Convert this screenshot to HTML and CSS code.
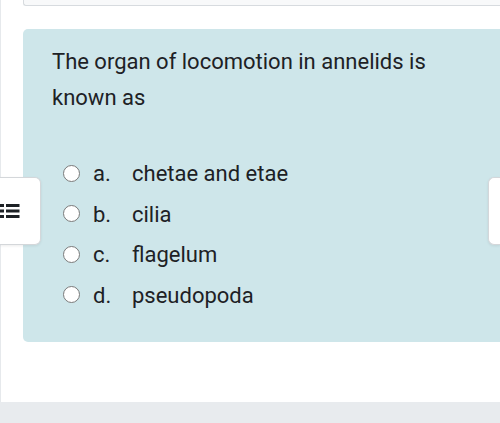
FILE: index.html
```html
<!DOCTYPE html>
<html>
<head>
<meta charset="utf-8">
<link rel="stylesheet" href="styles.css">
</head>
<body>
<div class="page">
  <div class="region">
    <div class="info-box"></div>
    <div class="formulation">
      <div class="qtext">The organ of locomotion in annelids is known as</div>
      <div class="answer">
        <label class="opt"><input type="radio" name="q1" class="radio"><span class="letter">a.</span><span class="text">chetae and etae</span></label>
        <label class="opt"><input type="radio" name="q1" class="radio"><span class="letter">b.</span><span class="text">cilia</span></label>
        <label class="opt"><input type="radio" name="q1" class="radio"><span class="letter">c.</span><span class="text">flagelum</span></label>
        <label class="opt"><input type="radio" name="q1" class="radio"><span class="letter">d.</span><span class="text">pseudopoda</span></label>
      </div>
    </div>
  </div>
  <div class="footer"></div>
  <button class="drawer-toggle left" aria-label="Open course index">
    <svg width="20" height="18" viewBox="0 0 20 18">
      <rect x="0" y="2" width="4" height="3" fill="#1d2125"/>
      <rect x="6" y="2" width="13.5" height="3" fill="#1d2125"/>
      <rect x="0" y="7.5" width="4" height="3" fill="#1d2125"/>
      <rect x="6" y="7.5" width="13.5" height="3" fill="#1d2125"/>
      <rect x="0" y="13" width="4" height="3" fill="#1d2125"/>
      <rect x="6" y="13" width="13.5" height="3" fill="#1d2125"/>
    </svg>
  </button>
  <button class="drawer-toggle right" aria-label="Open block drawer"></button>
</div>
</body>
</html>
```

FILE: styles.css
```css
html, body {
  margin: 0;
  padding: 0;
  overflow: hidden;
  background: #fff;
}
body {
  font-family: Roboto, "Liberation Sans", sans-serif;
  color: #1d2125;
  width: 500px;
  height: 423px;
}
.page {
  position: relative;
  height: 423px;
  display: flex;
  flex-direction: column;
  overflow: hidden;
}
.region {
  height: 402px;
  border-left: 1px solid #e6e9ec;
  padding-left: 22px;
  box-sizing: border-box;
  display: flex;
  flex-direction: column;
}
.info-box {
  height: 5px;
  background: #f8f9fa;
  border: 1px solid #d7dbdf;
  border-top: none;
  border-right: none;
  border-bottom-left-radius: 3px;
}
.formulation {
  margin-top: 23px;
  height: 313px;
  box-sizing: border-box;
  background: #cee6ea;
  border-radius: 5px 0 0 5px;
  padding: 14.5px 0 26px 29px;
}
.qtext {
  font-size: 22px;
  line-height: 36px;
  width: 400px;
}
.answer {
  margin-top: 38.5px;
  display: flex;
  flex-direction: column;
}
.opt {
  display: flex;
  align-items: center;
  height: 40.5px;
  font-size: 22px;
  line-height: 24px;
}
.radio {
  appearance: none;
  -webkit-appearance: none;
  margin: 0 13px 0 11px;
  width: 17px;
  height: 17px;
  border: 1.5px solid #7a7a7a;
  border-radius: 50%;
  background: #fff;
  box-sizing: border-box;
  position: relative;
  top: -1px;
}
.letter {
  width: 39px;
}
.footer {
  height: 21px;
  background: #e8ebee;
}
.drawer-toggle {
  position: absolute;
  top: 177px;
  height: 68px;
  background: #fff;
  border: 1px solid #d4d7da;
  padding: 0;
  box-shadow: 0 1px 3px rgba(0,0,0,0.08);
  display: flex;
  align-items: center;
}
.drawer-toggle.left {
  left: 0;
  width: 41px;
  border-left: none;
  border-radius: 0 6px 6px 0;
  justify-content: flex-start;
}
.drawer-toggle.right {
  left: 488px;
  width: 12px;
  border-right: none;
  border-radius: 6px 0 0 6px;
}
```
